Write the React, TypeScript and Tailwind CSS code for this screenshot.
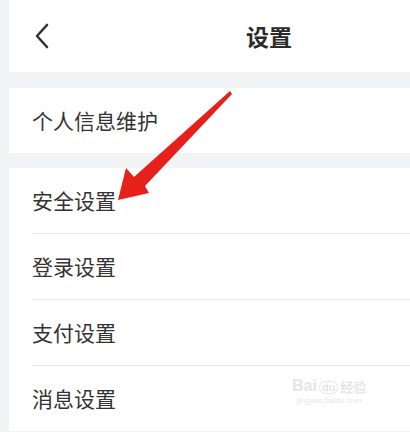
import React from "react";

const rows = ["安全设置", "登录设置", "支付设置", "消息设置"];

export default function App() {
  return (
    <div
      className="relative w-[410px] h-[432px] overflow-hidden bg-[#f2f3f5] pl-[9px]"
      style={{ fontFamily: '"Noto Sans CJK SC", "Noto Sans", sans-serif' }}
    >
      <div className="h-[72px] bg-white flex items-center">
        <div className="ml-[25px] w-[16px] flex items-center">
          <svg width="16" height="26" viewBox="0 0 16 26">
            <path d="M13 2 L3 13 L13 24" fill="none" stroke="#333" strokeWidth="2.6" strokeLinecap="round" strokeLinejoin="round" />
          </svg>
        </div>
        <div className="ml-[196px] text-[23px] font-bold text-[#2a2a2a] leading-none">设置</div>
      </div>
      <div className="h-[16px]" />
      <div className="h-[65px] bg-white flex items-center pl-[23px] text-[21px] text-[#333]">个人信息维护</div>
      <div className="h-[15px]" />
      <div className="bg-white flex flex-col">
        {rows.map((r, i) => (
          <div key={r} className="flex flex-col">
            {i > 0 && <div className="ml-[23px] h-px bg-[#e9e9e9]" />}
            <div className="h-[65px] flex items-center pl-[23px] text-[21px] text-[#333]">{r}</div>
          </div>
        ))}
      </div>

      <svg className="absolute left-0 top-0" width="410" height="432" viewBox="0 0 410 432">
        <polygon
          points="118,200 126,168 134,177 230,91 232,94 145,186 149,193"
          fill="#e8201c"
        />
      </svg>

      <div className="absolute left-[292px] top-[378px] flex flex-col items-center text-[#e6e6e6] leading-none">
        <div className="flex items-end gap-[2px] text-[16px] font-bold" style={{ fontFamily: '"Liberation Sans", "Noto Sans CJK SC", sans-serif' }}>
          <span>Bai</span>
          <span className="text-[11px] rounded-full border border-[#e6e6e6] px-[2px]">du</span>
          <span className="text-[13px]">经验</span>
        </div>
        <div className="text-[8px] mt-[3px]" style={{ fontFamily: '"Liberation Sans", sans-serif' }}>jingyan.baidu.com</div>
      </div>
    </div>
  );
}
